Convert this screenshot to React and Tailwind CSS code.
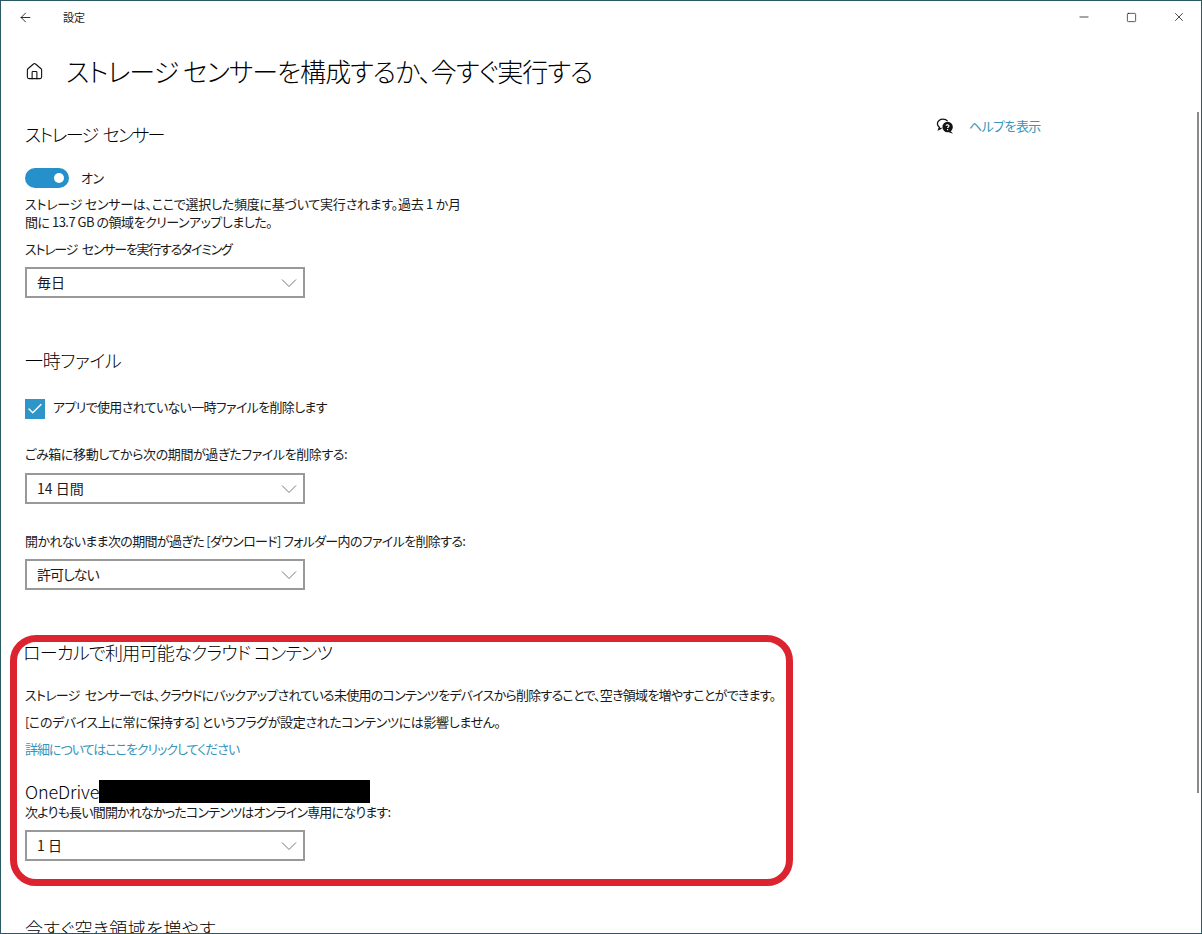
import { ArrowLeft, Home, Minus, Square, X, Check } from "lucide-react";

function Select({ value, className = "" }) {
  return (
    <div className="flex h-[31px] w-[280px] items-center justify-between border-2 border-[#999999] bg-white pl-[10px] pr-[6px] text-[14px] text-[#1a1a1a]">
      <span className={className}>{value}</span>
      <svg width="16" height="10" viewBox="0 0 16 10" fill="none" stroke="#777777" strokeWidth="1">
        <path d="M1 1.5 L8 8.5 L15 1.5" />
      </svg>
    </div>
  );
}

function Heading({ children, className = "" }) {
  return <h2 className={`whitespace-nowrap text-[18px] font-light leading-[26px] text-black ${className}`}>{children}</h2>;
}

function Label({ children, className = "" }) {
  return <p className={`whitespace-nowrap text-[13px] leading-[18px] ${className}`}>{children}</p>;
}

function HelpIcon() {
  return (
    <svg width="18" height="17" viewBox="0 0 18 17">
      <path d="M7 1.2c-3 0-5.6 2-5.6 4.6 0 1.5.8 2.6 2 3.4L2.6 11.6l3-1.4" fill="none" stroke="#111111" strokeWidth="1.3" />
      <path d="M7 1.2c2 0 3.6.8 4.6 2" fill="none" stroke="#111111" strokeWidth="1.3" />
      <circle cx="11.6" cy="9" r="5.2" fill="#111111" />
      <path d="M14.5 13 L17 15.8 L12.8 14.2 Z" fill="#111111" />
      <path d="M10 7.6c.2-1 2.9-1.1 3 .3.1 1-1.4 1.1-1.4 2.2" fill="none" stroke="#ffffff" strokeWidth="1.1" />
      <rect x="11" y="11" width="1.2" height="1.2" fill="#ffffff" />
    </svg>
  );
}

export default function App() {
  return (
    <div className="relative h-[934px] w-[1202px] overflow-hidden border border-[#2c5a63] bg-white font-['Noto_Sans_CJK_JP','Liberation_Sans',sans-serif] [font-feature-settings:'palt'] font-normal text-[#1a1a1a]">
      {/* title bar */}
      <div className="flex h-[32px] items-center justify-between pl-[17px] pr-[15px]">
        <div className="flex items-center">
          <ArrowLeft size={15} strokeWidth={1.4} className="text-[#111111]" />
          <span className="ml-[30px] text-[11px] text-[#222222]">設定</span>
        </div>
        <div className="flex items-center gap-[35px]">
          <Minus size={14} strokeWidth={1.3} className="text-[#111111]" />
          <Square size={11} strokeWidth={1.5} className="text-[#111111]" />
          <X size={14} strokeWidth={1.3} className="text-[#111111]" />
        </div>
      </div>

      <div className="flex">
        <main className="w-[880px] pl-[24px]">
          {/* page title */}
          <div className="mt-[19px] flex h-[38px] items-center">
            <Home size={19} strokeWidth={1.4} className="text-[#111111]" />
            <h1 className="ml-[22px] whitespace-nowrap text-[26px] font-light leading-[38px] tracking-[-0.95px] text-black">
              ストレージ センサーを構成するか、今すぐ実行する
            </h1>
          </div>

          <Heading className="mt-[31px] tracking-[-1.7px] [word-spacing:3px]">ストレージ センサー</Heading>

          <div className="mt-[21px] flex h-[20px] items-center">
            <div className="flex h-[20px] w-[44px] items-center justify-end rounded-full bg-[#2590c9] pr-[5px]">
              <div className="h-[10px] w-[10px] rounded-full bg-white" />
            </div>
            <span className="ml-[12px] text-[13px] tracking-[-0.6px]">オン</span>
          </div>

          <p className="mt-[7px] whitespace-nowrap text-[13px] leading-[18px]">
            <span className="block tracking-[-0.25px]">ストレージ センサーは、ここで選択した頻度に基づいて実行されます。過去 1 か月</span>
            <span className="block tracking-[-0.5px]">間に 13.7 GB の領域をクリーンアップしました。</span>
          </p>
          <Label className="mt-[9px] tracking-[-1.25px] [word-spacing:3px]">ストレージ センサーを実行するタイミング</Label>
          <div className="mt-[9px]">
            <Select value="毎日" />
          </div>

          <Heading className="mt-[49px] tracking-[-0.3px]">一時ファイル</Heading>

          <div className="mt-[26px] flex h-[20px] items-center">
            <div className="flex h-[20px] w-[20px] items-center justify-center bg-[#2f94c8]">
              <Check size={18} strokeWidth={1.8} className="text-white" />
            </div>
            <Label className="ml-[8px] pb-[4px] tracking-[-0.67px]">アプリで使用されていない一時ファイルを削除します</Label>
          </div>

          <Label className="mt-[26px] tracking-[-0.4px]">ごみ箱に移動してから次の期間が過ぎたファイルを削除する:</Label>
          <div className="mt-[10px]">
            <Select value="14 日間" />
          </div>

          <Label className="mt-[28px] tracking-[-0.66px]">開かれないまま次の期間が過ぎた [ダウンロード] フォルダー内のファイルを削除する:</Label>
          <div className="mt-[9px]">
            <Select value="許可しない" className="tracking-[-1px]" />
          </div>

          <Heading className="mt-[49px] -ml-[2px] tracking-[-0.7px]">ローカルで利用可能なクラウド コンテンツ</Heading>

          <Label className="mt-[21px] tracking-[-0.73px] [word-spacing:3px]">
            ストレージ センサーでは、クラウドにバックアップされている未使用のコンテンツをデバイスから削除することで、空き領域を増やすことができます。
          </Label>
          <Label className="mt-[9px] tracking-[-0.37px]">[このデバイス上に常に保持する] というフラグが設定されたコンテンツには影響しません。</Label>
          <Label className="mt-[9px] tracking-[-1px] text-[#3a93b8]">詳細についてはここをクリックしてください</Label>

          <div className="mt-[21px] flex h-[24px] items-center">
            <span className="text-[18px] font-light tracking-[-0.1px] text-black">OneDrive</span>
            <div className="h-[23px] w-[271px] bg-black" />
          </div>
          <Label className="tracking-[-0.8px]">次よりも長い間開かれなかったコンテンツはオンライン専用になります:</Label>
          <div className="mt-[9px]">
            <Select value="1 日" />
          </div>

          <Heading className="mt-[54px] tracking-[0.5px]">今すぐ空き領域を増やす</Heading>
        </main>

        <aside className="ml-[55px] mt-[83px] flex h-[20px] items-center">
          <HelpIcon />
          <span className="ml-[15px] text-[13px] tracking-[-0.6px] text-[#3a93b8]">ヘルプを表示</span>
        </aside>
      </div>

      {/* scrollbar thumb */}
      <div className="absolute right-[2px] top-[111px] h-[681px] w-[2px] bg-[#8a8a8a]" />

      {/* red annotation frame */}
      <div className="pointer-events-none absolute left-[9px] top-[634px] h-[251px] w-[783px] rounded-[26px] border-[7px] border-[#dc2430]" />
    </div>
  );
}
